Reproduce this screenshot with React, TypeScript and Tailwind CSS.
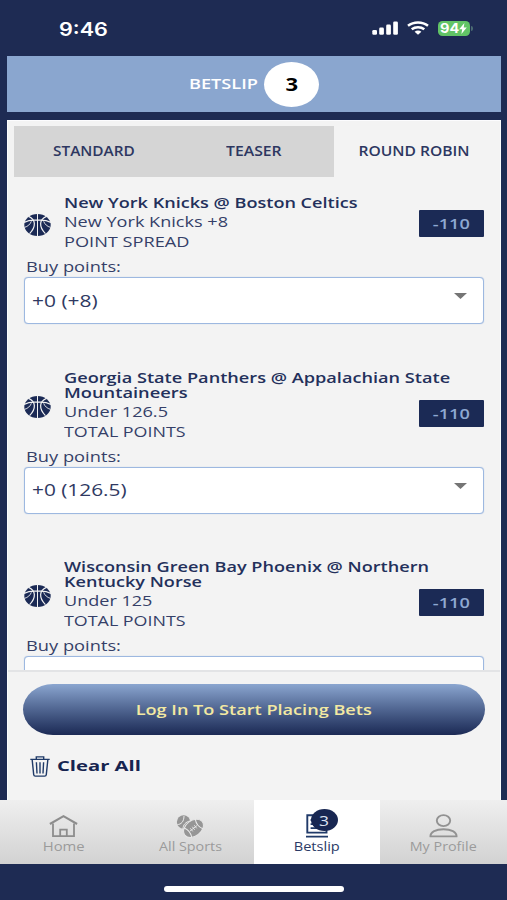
import { useLayoutEffect, useRef, useState } from "react";
import clsx from "clsx";

type WideProps = {
  children: string;
  width: number;
  align?: "left" | "center";
  className?: string;
};

/** Single line of text set in an expanded width. */
function Wide({ children, width, align = "left", className }: WideProps) {
  const ref = useRef<HTMLSpanElement>(null);
  const [scale, setScale] = useState(1.2);
  useLayoutEffect(() => {
    if (ref.current) setScale(width / ref.current.offsetWidth);
  }, [width, children]);
  return (
    <span
      ref={ref}
      className={clsx(
        "block w-max whitespace-nowrap",
        align === "left" ? "origin-left" : "origin-center",
        className,
      )}
      style={{ transform: `scaleX(${scale})` }}
    >
      {children}
    </span>
  );
}

function StatusBar() {
  return (
    <header className="flex h-14 shrink-0 items-center justify-between pr-[34px] pl-[59px] text-white">
      <Wide width={49} className="mt-[2px] font-['Inter'] text-[18.5px] leading-6 font-semibold">
        9:46
      </Wide>
      <div className="flex items-center">
        <svg className="h-[14px] w-[27px]" viewBox="0 0 27 14" preserveAspectRatio="none" fill="currentColor">
          <rect x="0.3" y="9" width="4.7" height="4.7" rx="1.3" />
          <rect x="7.2" y="6.6" width="4.7" height="7.1" rx="1.3" />
          <rect x="14.2" y="3.6" width="4.7" height="10.1" rx="1.3" />
          <rect x="21.2" y="0.4" width="4.7" height="13.3" rx="1.3" />
        </svg>
        <svg className="ml-2 h-[14px] w-[22px]" viewBox="0 0 22 14" fill="none" stroke="currentColor" strokeWidth="2.5">
          <path d="M1 4.7C6.6.3 15.4.3 21 4.7" />
          <path d="M4.7 8.3c3.6-2.9 9-2.9 12.6 0" />
          <path d="M7.6 10.7c2-1.6 4.8-1.6 6.8 0L11 13.8z" fill="currentColor" stroke="none" />
        </svg>
        <div className="ml-[9px] flex h-[15px] w-8 items-center justify-center rounded-[4.5px] bg-[#62c466]">
          <Wide width={19} align="center" className="font-['Inter'] text-[13px] leading-[15px] font-bold">
            94
          </Wide>
          <svg className="ml-px h-[11px] w-2" viewBox="0 0 8 11" preserveAspectRatio="none" fill="currentColor">
            <path d="M5.4 0 .2 6.2h3L2.4 11l5.4-6.5H4.7z" />
          </svg>
        </div>
        <span className="ml-px h-[5px] w-[2px] rounded-r bg-[#4a6b72]" />
      </div>
    </header>
  );
}

function Basketball() {
  return (
    <svg className="mt-[3px] h-[22px] w-[27px]" viewBox="0 0 27 22" preserveAspectRatio="none">
      <ellipse cx="13.5" cy="11" rx="13.2" ry="10.9" fill="#1b2a55" />
      <g fill="none" stroke="#f3f3f3" strokeWidth="1.2">
        <path d="M13.5 0v22" strokeWidth="1" />
        <path d="M4.6 2.4C11.8 5.5 12.4 12.5 5.6 19.6M22.4 2.4c-7.2 3.1-7.8 10.1-1 17.2" />
        <path d="M0 8.4C4.5 6 9 5.8 13.5 6.2c4.5-.4 9-.2 13.5 2.2" />
        <path d="M.4 13.4C4 12.4 6 10.4 7.4 7.4M26.6 13.4c-3.6-1-5.6-3-7-6" strokeWidth="0.9" />
      </g>
    </svg>
  );
}

type Line = { text: string; width: number };
type Bet = { title: Line[]; pick: Line; market: Line; points?: Line };

const bets: Bet[] = [
  {
    title: [{ text: "New York Knicks @ Boston Celtics", width: 293 }],
    pick: { text: "New York Knicks +8", width: 164 },
    market: { text: "POINT SPREAD", width: 126 },
    points: { text: "+0 (+8)", width: 65.5 },
  },
  {
    title: [
      { text: "Georgia State Panthers @ Appalachian State", width: 386 },
      { text: "Mountaineers", width: 123 },
    ],
    pick: { text: "Under 126.5", width: 104 },
    market: { text: "TOTAL POINTS", width: 121.5 },
    points: { text: "+0 (126.5)", width: 95 },
  },
  {
    title: [
      { text: "Wisconsin Green Bay Phoenix @ Northern", width: 365.5 },
      { text: "Kentucky Norse", width: 138.5 },
    ],
    pick: { text: "Under 125", width: 89 },
    market: { text: "TOTAL POINTS", width: 121.5 },
  },
];

function BetRow({ bet }: { bet: Bet }) {
  return (
    <article className="pr-4 pl-4">
      <div className="flex pb-[2px]">
        <div className="flex w-[39.5px] shrink-0 items-center">
          <Basketball />
        </div>
        <div className="min-w-0 flex-1">
          <div className="mb-px leading-[15px] font-semibold text-[#23305b]">
            {bet.title.map((l) => (
              <Wide key={l.text} width={l.width}>
                {l.text}
              </Wide>
            ))}
          </div>
          <div className="leading-5 text-[#353f68]">
            <Wide width={bet.pick.width}>{bet.pick.text}</Wide>
            <Wide width={bet.market.width}>{bet.market.text}</Wide>
          </div>
        </div>
        <div className="mb-[14px] flex h-[27px] w-[65px] items-center justify-center self-end rounded-[1px] bg-[#1b2a55] font-semibold text-[#8ea8d2]">
          <Wide width={37.5} align="center">
            -110
          </Wide>
        </div>
      </div>
      <div className="pt-[3px] pb-px pl-[1.5px] leading-5 text-[#353f68]">
        <Wide width={95}>Buy points:</Wide>
      </div>
      <div className="flex h-[47px] items-center justify-between rounded-[4px] border-[1.5px] border-[#9db8e0] bg-white pr-4 pl-[7px] text-base text-[#2f3962] shadow-[0_0_1px_#a4bcdf]">
        {bet.points && <Wide width={bet.points.width}>{bet.points.text}</Wide>}
        <svg className="mb-[9px] ml-auto h-[6px] w-[13px]" viewBox="0 0 13 6" preserveAspectRatio="none" fill="#757575">
          <path d="M0 0h13L6.5 6z" />
        </svg>
      </div>
    </article>
  );
}

function Tabs() {
  return (
    <nav className="mx-[6px] mt-[5px] grid h-[51px] shrink-0 grid-cols-3 text-[13.5px] font-semibold text-[#2d3761]">
      <div className="flex items-center justify-center bg-[#d5d5d5]">
        <Wide width={82} align="center">STANDARD</Wide>
      </div>
      <div className="flex items-center justify-center bg-[#d5d5d5]">
        <Wide width={56} align="center">TEASER</Wide>
      </div>
      <div className="flex items-center justify-center">
        <Wide width={111} align="center">ROUND ROBIN</Wide>
      </div>
    </nav>
  );
}

function TrashIcon() {
  return (
    <svg className="h-[21px] w-5" viewBox="0 0 20 21" fill="none" stroke="#1f3a68" strokeWidth="1.4">
      <path d="M.3 3.4h19.4M6.3 3V.9h7.4V3M2.2 4l1.5 14.6c.1.9.7 1.5 1.6 1.5h9.4c.9 0 1.5-.6 1.6-1.5L17.8 4" />
      <path d="M6.4 6.2 7 17.5M10 6.2v11.3M13.6 6.2 13 17.5" />
    </svg>
  );
}

function HomeIcon() {
  return (
    <svg className="h-6 w-[29px]" viewBox="0 0 29 24" fill="none" stroke="#8d8d8d" strokeWidth="1.8">
      <path d="M.9 10 14.5 2.2 28.1 10" strokeWidth="2.1" />
      <path d="M4 9.4v12.7h21V9.4M11.2 22v-6.4h6.6V22" />
    </svg>
  );
}

function SportsIcon() {
  return (
    <svg className="h-6 w-[28px]" viewBox="0 0 28 24">
      <circle cx="7.6" cy="8" r="6.7" fill="#969696" />
      <g fill="none" stroke="#ececec" strokeWidth="1">
        <path d="M1.4 10.5C5 10.6 8 7.6 8 2M7 15c0-4 2.6-7.4 7.4-8" />
      </g>
      <g transform="rotate(-38 17.5 14.3)">
        <ellipse cx="17.5" cy="14.3" rx="11" ry="7.8" fill="#969696" stroke="#e6e6e6" />
        <g fill="none" stroke="#ececec" strokeWidth="1.1">
          <path d="M10.5 8.3c2 3.6 2 8.4 0 12M24.5 8.3c-2 3.6-2 8.4 0 12" />
          <path d="M13 14.3h9M15 12.3v4M17.5 12.3v4M20 12.3v4" strokeWidth="0.8" />
        </g>
      </g>
    </svg>
  );
}

function BetslipIcon() {
  return (
    <div className="relative h-6 w-[22px]">
      <svg className="h-6 w-[22px]" viewBox="0 0 22 24" fill="none" stroke="#203a69" strokeWidth="1.9">
        <path d="M1.3 18.6V1.2h19.2v17.4zM0 22.6h22" />
        <path d="M4.6 6h4M4.6 10.2h4M4.6 14.2h8M14.6 14.6h3.6" strokeWidth="1.8" />
      </svg>
      <div className="absolute -top-[5px] left-[5px] flex h-[22px] w-[27px] items-center justify-center rounded-[50%] bg-[#182752] text-[14px] text-[#dbe2f1]">
        <Wide width={10} align="center">3</Wide>
      </div>
    </div>
  );
}

function ProfileIcon() {
  return (
    <svg className="h-6 w-[29px]" viewBox="0 0 29 24" fill="none" stroke="#929292" strokeWidth="1.9">
      <ellipse cx="14.5" cy="6.6" rx="6.7" ry="5.5" />
      <path d="M1.4 22.4c0-4.6 5.5-7.2 13.1-7.2s13.1 2.6 13.1 7.2z" strokeLinejoin="round" />
    </svg>
  );
}

const navItems = [
  { label: "Home", width: 41.5, Icon: HomeIcon, active: false },
  { label: "All Sports", width: 63, Icon: SportsIcon, active: false },
  { label: "Betslip", width: 45.5, Icon: BetslipIcon, active: true },
  { label: "My Profile", width: 66.5, Icon: ProfileIcon, active: false },
];

function BottomNav() {
  return (
    <nav className="grid h-[64px] shrink-0 grid-cols-4 bg-linear-to-b from-[#efefef] to-[#d2d2d2]">
      {navItems.map(({ label, width, Icon, active }) => (
        <div
          key={label}
          className={clsx(
            "flex flex-col items-center pt-[14px] text-[12.5px] leading-[17px]",
            active ? "bg-white text-[#2b3a66]" : "text-[#9b9b9b]",
          )}
        >
          <Icon />
          <Wide width={width} align="center">
            {label}
          </Wide>
        </div>
      ))}
    </nav>
  );
}

export default function App() {
  return (
    <div className="flex h-[900px] w-[507px] flex-col overflow-hidden bg-[#1e2b53] font-['Open_Sans','Noto_Sans',sans-serif] text-[15px]">
      <StatusBar />
      <div className="mr-[6px] ml-[7px] flex h-[56px] shrink-0 items-center justify-center bg-[#8aa6cf]">
        <div className="flex w-[68px] justify-center pb-px font-semibold text-white">
          <Wide width={69} align="center">BETSLIP</Wide>
        </div>
        <div className="ml-[7px] flex h-[45px] w-[55px] items-center justify-center rounded-[50%] bg-white text-[17px] font-bold text-black">
          <Wide width={13} align="center" className="mt-px">3</Wide>
        </div>
      </div>
      <main className="mt-2 mr-[6px] ml-[7px] flex min-h-0 flex-1 flex-col border border-b-0 border-[#fcfcfe] bg-[#f3f3f3]">
        <Tabs />
        <section className="flex min-h-0 flex-1 flex-col gap-[45.5px] overflow-hidden pt-[18px]">
          {bets.map((bet) => (
            <BetRow key={bet.market.text + bet.pick.text} bet={bet} />
          ))}
        </section>
        <footer className="h-[130px] shrink-0 border-t-2 border-[#e3e4e6] bg-[#f3f3f3] px-[15px] pt-3">
          <button className="flex h-[51px] w-full items-center justify-center rounded-[30px/25.5px] bg-linear-to-b from-[#8ba6d0] to-[#1c2a55] font-semibold text-[#f3e9a2]">
            <Wide width={235.5} align="center" className="pb-px">Log In To Start Placing Bets</Wide>
          </button>
          <div className="mt-[19px] flex items-center pl-[6.5px] font-bold text-[#16244f]">
            <TrashIcon />
            <Wide width={83.5} className="mb-[2px] ml-[7px]">Clear All</Wide>
          </div>
        </footer>
      </main>
      <BottomNav />
      <div className="flex h-9 shrink-0 items-end justify-center pb-2">
        <div className="h-[6px] w-[180px] rounded-full bg-white" />
      </div>
    </div>
  );
}
